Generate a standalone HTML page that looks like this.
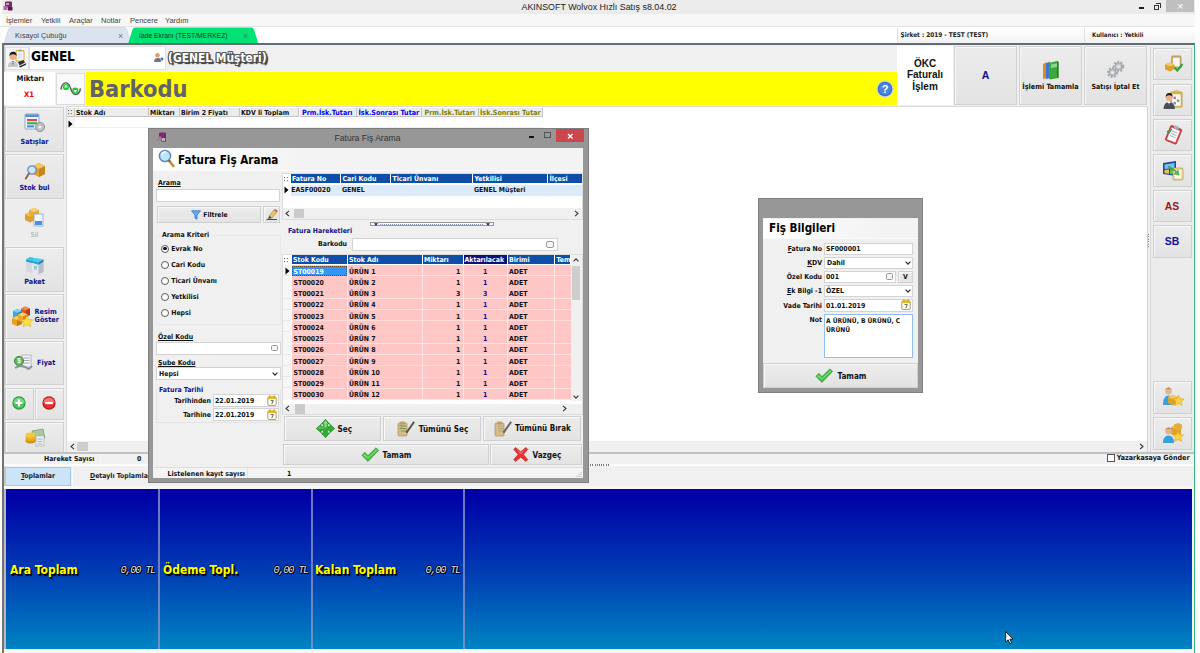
<!DOCTYPE html>
<html><head><meta charset="utf-8"><title>AKINSOFT Wolvox Hızlı Satış</title>
<style>
*{box-sizing:border-box;margin:0;padding:0}
html,body{width:1200px;height:653px;overflow:hidden;background:#f0f0f0}
body{position:relative;font-family:"DejaVu Sans Condensed","Liberation Sans",sans-serif;font-weight:bold;font-size:6.9px;color:#111;line-height:1}
.a{position:absolute}
.t{position:absolute;white-space:nowrap;line-height:10px;height:10px}
.seg{font-family:"Liberation Sans",sans-serif;font-weight:normal;font-size:8px;color:#444}
.btn{position:absolute;background:linear-gradient(#ececec,#e3e3e3);border:1px solid #d0d0d0;box-shadow:inset 1px 1px 0 #f8f8f8}
.navy{color:#10108c}
.hd{position:absolute;top:107.6px;height:9.7px;background:#ececec;border-right:1px solid #c4c4c4;border-bottom:1px solid #c4c4c4;line-height:10px;padding-left:1px;white-space:nowrap;overflow:hidden}
.inp{position:absolute;background:#fff;border:1px solid #d4d4d4}
.u{text-decoration:underline}
.yl{font-size:12px;line-height:16px;height:16px;color:#ffff00;text-shadow:1px 1px 0 #000,1.5px 1.5px 1px #001}
.dg{font-family:"Liberation Mono",monospace;font-weight:normal;font-style:italic;font-size:10.3px;letter-spacing:-1.25px;line-height:12px;height:12px;color:#dfe2ee;text-shadow:-1px 0 #000,1px 0 #000,0 -1px #000,0 1px #000,1px 1px #001}

.bh{position:absolute;height:9px;background:#0e4ea6;color:#fff;line-height:10px;padding-left:1.5px;white-space:nowrap;overflow:hidden;font-size:6.9px}
.rd{position:absolute;left:161.2px;width:8px;height:8px;border-radius:50%;background:#fff;border:1px solid #5a5a5a}
.rd i{position:absolute;left:1.2px;top:1.2px;width:3.6px;height:3.6px;border-radius:50%;background:#111}
.cal{position:absolute;width:9px;height:10px;background:#fdfdf4;border:1px solid #8a8a8a;border-top:2.5px solid #e8b020;border-radius:1.5px}
.cal:after{content:"";position:absolute;left:2.5px;top:2px;width:2px;height:3px;background:#666}
.r2{position:absolute;left:291.5px;width:279.5px;height:12px;line-height:12px;font-size:6.9px;white-space:nowrap}
.c{position:absolute;top:0;height:12px;padding:0 1.5px;overflow:hidden}
.k{left:0.5px;width:55.3px}.n{left:56px;width:74.3px}.m{left:131px;width:40.3px;text-align:right;padding-right:2.5px}.ak{left:172px;width:43.3px;text-align:center;color:#10108c}.b{left:216px;width:46.8px}
svg{position:absolute;overflow:visible}
</style></head><body>
<!-- TOP CHROME -->
<div class="a" id="titlebar" style="left:0;top:0;width:1200px;height:13.5px;background:#ececec"></div>
<div class="a" id="menubar" style="left:0;top:13.5px;width:1200px;height:13.5px;background:#f7f7f7"></div>
<div class="a" id="tabrow" style="left:0;top:27px;width:1200px;height:17px;background:#fff"></div>
<div class="a" style="left:0;top:0;width:2px;height:653px;background:#fbfbfb"></div>
<!--CHROME-START-->
<svg style="left:3px;top:1px" width="11" height="11" viewBox="0 0 11 11"><rect x="2" y="0.5" width="7" height="6" rx="1" fill="#7a2a6a"/><rect x="0.5" y="5" width="4" height="4" fill="#b06aa0"/><rect x="5" y="6" width="4.5" height="3.5" fill="#5a1a4a"/><rect x="3" y="2" width="3" height="2" fill="#c9a0c0"/></svg>
<div class="t seg" style="left:521px;top:2px;font-size:8.9px;color:#222;width:156px;text-align:center">AKINSOFT Wolvox Hızlı Satış s8.04.02</div>
<div class="a" style="left:1139px;top:7px;width:5px;height:2px;background:#222"></div>
<div class="a" style="left:1153.5px;top:4.5px;width:5.5px;height:5px;border:1px solid #333;border-top-width:1.5px"></div>
<div class="a" style="left:1155.5px;top:3px;width:5px;height:4.5px;border:1px solid #333;border-bottom:0;border-left:0;border-top-width:1.3px"></div>
<div class="a" style="left:1166.3px;top:0;width:28px;height:11.5px;background:#bfbfbf"></div>
<div class="t" style="left:1177.3px;top:0.6px;color:#fff;font-size:10.5px;font-weight:normal;font-family:'Liberation Sans',sans-serif">×</div>
<div class="t seg" style="left:6px;top:15.8px;font-size:7.5px">İşlemler</div>
<div class="t seg" style="left:41px;top:15.8px;font-size:7.5px">Yetkili</div>
<div class="t seg" style="left:69px;top:15.8px;font-size:7.5px">Araçlar</div>
<div class="t seg" style="left:101px;top:15.8px;font-size:7.5px">Notlar</div>
<div class="t seg" style="left:130px;top:15.8px;font-size:7.5px">Pencere</div>
<div class="t seg" style="left:165px;top:15.8px;font-size:7.5px">Yardım</div>
<div class="a" style="left:0;top:26px;width:1200px;height:1px;background:#e4e4e4"></div>
<svg style="left:0;top:27px" width="270" height="17" viewBox="0 0 270 17"><path d="M4 17 L8.5 2 Q9 0.5 11 0.5 L124 0.5 Q126 0.5 126.8 2.5 L131 17 Z" fill="#dae3ee" stroke="#c3cfdd" stroke-width="0.6"/><path d="M128 17 L132.5 2.5 Q133 0.5 135.5 0.5 L251 0.5 Q253.5 0.5 254 2.5 L258.5 17 Z" fill="#00e273"/></svg>
<div class="t seg" style="left:15px;top:31.3px;font-size:7.3px;color:#444">Kısayol Çubuğu</div>
<div class="t seg" style="left:118px;top:31px;font-size:9px;color:#777">×</div>
<div class="t seg" style="left:139px;top:31.3px;font-size:7.3px;color:#1a3a2a;transform:scaleX(.93);transform-origin:0 0">İade Ekranı (TEST/MERKEZ)</div>
<div class="t seg" style="left:243px;top:31px;font-size:9px;color:#3a8a6a">×</div>
<div class="a" style="left:897px;top:28px;width:187px;height:15px;background:linear-gradient(#fff,#f2f2f2);border-left:1px solid #e2e2e2"></div>
<div class="a" style="left:1084px;top:28px;width:112px;height:15px;background:linear-gradient(#fff,#f2f2f2);border-left:1px solid #e2e2e2"></div>
<div class="t" style="left:900.5px;top:30px;font-size:6.45px;color:#222">Şirket : 2019 - TEST (TEST)</div>
<div class="t" style="left:1092px;top:30px;font-size:6.1px;color:#222">Kullanıcı : Yetkili</div>
<!--CHROME-END-->
<!-- MAIN FRAME -->
<div class="a" id="frame" style="left:2px;top:43.4px;width:1193px;height:610px;background:#f0f0f0"></div>
<div class="a" style="left:2px;top:43.4px;width:1193px;height:1.7px;background:#626c74"></div>
<div class="a" style="left:2px;top:43.4px;width:1.6px;height:610px;background:#747474"></div>
<div class="a" style="left:3.6px;top:45px;width:0.8px;height:608px;background:#c8c8c8"></div>
<!--HEADER-START-->
<!-- customer row -->
<div class="a" style="left:4.5px;top:46.5px;width:24.5px;height:23.5px;background:#f6f6f6;border:1px solid #dedede"></div>
<svg style="left:7px;top:49px" width="20" height="19" viewBox="0 0 20 19"><rect x="9" y="1.6" width="8" height="10.5" rx="1" fill="#f4f8fc" stroke="#e0b030" stroke-width="1.1"/><rect x="11.5" y="0.6" width="3" height="2" rx=".6" fill="#8aa8d0"/><path d="M11 5 H15 M11 7 H15 M11 9 H15" stroke="#b8c8e0" stroke-width=".7"/><circle cx="6" cy="7.6" r="3.5" fill="#f0b090"/><path d="M2.3 7 Q2.5 2.6 6.5 2.8 Q9.8 3 9.6 7 Q8.6 4.8 6 5.2 Q3.6 5 2.3 7Z" fill="#181818"/><path d="M0.8 18 Q1 12 6 12 Q11 12 11.2 18Z" fill="#c4c8ce"/><path d="M5 12 L6 16.5 L7 12Z" fill="#444"/><path d="M4 12 L6 13.6 L8 12" fill="none" stroke="#fff" stroke-width=".8"/><path d="M11 13 L16.5 11 L18 13.5 L12.5 16.5Z" fill="#2a2e34"/><path d="M12 17.5 L17.5 15 L19.5 14 L18.6 16 L13 18.5Z" fill="#1c1c20"/></svg>
<div class="a" style="left:29px;top:46px;width:137px;height:24px;background:#fff;border:1px solid #e0e0e0"></div>
<div class="t" style="left:31px;top:49.3px;font-size:13.6px;letter-spacing:-0.25px;line-height:15px;height:15px;color:#000">GENEL</div>
<svg style="left:153px;top:52px" width="11" height="11" viewBox="0 0 11 11"><circle cx="4.5" cy="3.2" r="2.3" fill="#d9a070"/><path d="M1 10 Q1 6 4.5 6 Q8 6 8 10Z" fill="#6a7684"/><path d="M6 7 L10 7 M8.5 5.5 L10 7 L8.5 8.5" stroke="#3a6ab0" stroke-width="1.1" fill="none"/></svg>
<div class="t" style="left:168px;top:50px;font-size:11.9px;line-height:16px;height:16px;color:#fff;text-shadow:-1px 0 #555,1px 0 #555,0 -1px #555,0 1px #555,-1px -1px #666,1px -1px #666,-1px 1px #555,1px 1px #444,2px 2px 1px #333,2px 1px 1px #444">(GENEL Müşteri)</div>
<!-- barcode row -->
<div class="a" style="left:4px;top:71.5px;width:51px;height:33.5px;background:#fff"></div>
<div class="t" style="left:16.5px;top:74px;font-size:7.7px;color:#111">Miktarı</div>
<div class="t" style="left:24px;top:89.5px;font-size:7.7px;color:#f00000">X1</div>
<div class="a" style="left:56px;top:73px;width:29px;height:32px;background:#fafafa;border:1px solid #dcdcdc"></div>
<svg style="left:59.5px;top:79.5px" width="22" height="18" viewBox="0 0 22 18"><path d="M0.5 9 H21.5" stroke="#f0a030" stroke-width=".8" stroke-dasharray="1 1"/><path d="M1 9.5 C2 2 8 0 10.5 8 C13 17 19 16 20.5 8.5" fill="none" stroke="#5a5a5a" stroke-width="1.4"/><circle cx="6" cy="7" r="3.1" fill="#22c83a"/><circle cx="15.3" cy="10.6" r="3.1" fill="#22c83a"/><path d="M6 4.6 L8 7.6 L4 7.6Z" fill="#c8ffd0"/><path d="M15.3 13 L17.3 10 L13.3 10Z" fill="#c8ffd0"/></svg>
<div class="a" style="left:86px;top:72px;width:811px;height:33px;background:#ffff00"></div>
<div class="t" style="left:89px;top:73.6px;font-size:23.4px;line-height:30px;height:30px;color:#62626e">Barkodu</div>
<svg style="left:876px;top:80px" width="18" height="18" viewBox="0 0 18 18"><circle cx="9" cy="9" r="8.5" fill="#c8d4e8"/><circle cx="9" cy="9" r="7.3" fill="#3a6cc8"/><circle cx="9" cy="9" r="6" fill="#4a86e0"/><text x="9" y="13" font-family="Liberation Sans" font-weight="bold" font-size="11" fill="#fff" text-anchor="middle">?</text></svg>
<!-- top right buttons -->
<div class="a" style="left:897px;top:46px;width:56px;height:59px;background:#fff"></div>
<div class="t" style="left:897px;top:57.5px;width:56px;text-align:center;font-family:'Liberation Sans',sans-serif;font-size:10px;line-height:11.7px;height:36px;color:#111;white-space:normal">ÖKC Faturalı İşlem</div>
<div class="btn" style="left:954px;top:46px;width:63px;height:59px"></div>
<div class="t navy" style="left:954px;top:69px;width:63px;text-align:center;font-family:'Liberation Sans',sans-serif;font-size:10.5px;line-height:12px;height:12px">A</div>
<div class="btn" style="left:1019px;top:46px;width:63px;height:59px"></div>
<svg style="left:1042px;top:60px" width="18" height="20" viewBox="0 0 18 20"><path d="M1 4 L5 2 L5 18 L1 19Z" fill="#e08a20"/><path d="M4 3.5 L8 1.5 L8 18 L4 19Z" fill="#3a78d0"/><path d="M7 3 L15 1 L16.5 2 L16.5 18 L8 19.5 L7 18.5Z" fill="#3aa83a"/><path d="M9 4.5 L15 3.3 L15 7 L9 8Z" fill="#8ad88a"/><path d="M15 1 L16.5 2 L16.5 18 L15 17Z" fill="#2a7a2a"/></svg>
<div class="t" style="left:1019px;top:82.3px;width:63px;text-align:center;font-size:7.2px">İşlemi Tamamla</div>
<div class="btn" style="left:1084px;top:46px;width:63px;height:59px"></div>
<svg style="left:1106px;top:60px" width="20" height="19" viewBox="0 0 20 19"><g fill="#c4c8cc" stroke="#8a9096" stroke-width=".7"><circle cx="12.5" cy="6.5" r="4.6" stroke-dasharray="2 1.3" stroke-width="2.4" fill="none" stroke="#a8adb2"/><circle cx="12.5" cy="6.5" r="3.6"/><circle cx="6.5" cy="12.5" r="4.4" stroke-dasharray="2 1.3" stroke-width="2.4" fill="none" stroke="#a8adb2"/><circle cx="6.5" cy="12.5" r="3.4"/></g><circle cx="12.5" cy="6.5" r="1.3" fill="#f0f0f0"/><circle cx="6.5" cy="12.5" r="1.3" fill="#f0f0f0"/></svg>
<div class="t" style="left:1084px;top:82.3px;width:63px;text-align:center;font-size:7px">Satışı İptal Et</div>
<!--HEADER-END-->
<!--LEFT-SIDEBAR-START-->
<div class="btn" style="left:5px;top:107px;width:59px;height:45px"></div>
<svg style="left:24px;top:113px" width="22" height="20" viewBox="0 0 22 20"><rect x="1" y="1" width="14" height="15" rx="1" fill="#eef4fb" stroke="#7a9ac8" stroke-width=".8"/><rect x="1.4" y="1.4" width="13.2" height="2.6" fill="#5a8ad0"/><rect x="3" y="6" width="10" height="2.2" fill="#e04848"/><rect x="3" y="9.2" width="10" height="2.2" fill="#38b060"/><rect x="3" y="12.4" width="7" height="2" fill="#4a80d8"/><circle cx="16" cy="14" r="4.6" fill="#b8bec6" stroke="#7a8088" stroke-width=".7"/><circle cx="16" cy="14" r="1.6" fill="#f4f4f4"/></svg>
<div class="t navy" style="left:5px;top:137px;width:59px;text-align:center;font-size:7.2px">Satışlar</div>
<div class="btn" style="left:5px;top:154px;width:59px;height:45px"></div>
<svg style="left:25px;top:161px" width="22" height="20" viewBox="0 0 22 20"><path d="M8 5 L14 2 L20 5 L20 13 L14 16 L8 13Z" fill="#e0a030"/><path d="M8 5 L14 8 L20 5 L14 2Z" fill="#f4c860"/><path d="M14 8 L14 16 L20 13 L20 5Z" fill="#c88420"/><circle cx="7" cy="9" r="4.2" fill="#cfe6fa" stroke="#6a8ab8" stroke-width="1.2"/><path d="M4 12.5 L0.8 17.5" stroke="#8a6a3a" stroke-width="2" stroke-linecap="round"/></svg>
<div class="t navy" style="left:5px;top:183px;width:59px;text-align:center;font-size:7.2px">Stok bul</div>
<div class="a" style="left:5px;top:200px;width:59px;height:45px;background:#ededed"></div>
<svg style="left:24px;top:207px" width="22" height="21" viewBox="0 0 22 21"><path d="M1 7 L6 4.5 L11 7 L11 13 L6 15.5 L1 13Z" fill="#e0a030"/><path d="M1 7 L6 9.5 L11 7 L6 4.5Z" fill="#f4c860"/><path d="M5 3 L10 0.8 L15 3 L15 8 L10 10 L5 8Z" fill="#e8ac38"/><path d="M5 3 L10 5 L15 3 L10 0.8Z" fill="#f8d070"/><rect x="10" y="7" width="9" height="12" fill="#f4f8fc" stroke="#8aa4c8" stroke-width=".8"/><rect x="11" y="14" width="7" height="4" fill="#4a90e0"/></svg>
<div class="t" style="left:5px;top:230px;width:59px;text-align:center;font-size:6.9px;font-weight:normal;color:#9a9a9a">Sil</div>
<div class="btn" style="left:5px;top:247px;width:59px;height:45px"></div>
<svg style="left:25px;top:253.5px" width="20" height="21" viewBox="0 0 20 21"><path d="M1 5.5 L5 3 L11 4.5 L11 17 L6.5 19 L1 17Z" fill="#d4d8de"/><path d="M1 5.5 L5 3 L11 4.5 L7 7Z" fill="#38c0ea"/><path d="M1 5.5 L7 7 L7 9 L1 7.5Z" fill="#20a0d0"/><path d="M7 7 L11 4.5 L11 6.5 L7 9Z" fill="#1888b8"/><path d="M7 6.5 L11.5 4 L18.5 5.5 L18.5 18 L13.5 20.5 L7 18.5Z" fill="#e2e5ea"/><path d="M13.5 8.5 L18.5 5.5 L18.5 18 L13.5 20.5Z" fill="#b8bec8"/><path d="M7 6.5 L11.5 4 L18.5 5.5 L13.5 8.5Z" fill="#48ccf0"/><path d="M7 6.5 L13.5 8.5 L13.5 10.8 L7 8.8Z" fill="#20a8d8"/><path d="M13.5 8.5 L18.5 5.5 L18.5 7.8 L13.5 10.8Z" fill="#1488b8"/><rect x="9" y="12" width="3" height="3.5" fill="#88b8e8" opacity=".8"/></svg>
<div class="t navy" style="left:5px;top:277px;width:59px;text-align:center;font-size:7.2px">Paket</div>
<div class="btn" style="left:5px;top:294px;width:59px;height:45px"></div>
<svg style="left:11px;top:305.5px" width="22" height="21" viewBox="0 0 22 21"><path d="M2 5 L6.5 3 L11 5 L11 11 L6.5 13 L2 11Z" fill="#3aa8e0"/><path d="M2 5 L6.5 7 L11 5 L6.5 3Z" fill="#7ad0f4"/><path d="M6.5 7 L6.5 13 L11 11 L11 5Z" fill="#2288c0"/><path d="M10 2.5 L14.5 0.5 L19 2.5 L19 9 L14.5 11 L10 9Z" fill="#e05828"/><path d="M10 2.5 L14.5 4.5 L19 2.5 L14.5 0.5Z" fill="#f08858"/><path d="M14.5 4.5 L14.5 11 L19 9 L19 2.5Z" fill="#b83c18"/><path d="M1 12 L6 10 L11 12 L11 18 L6 20 L1 18Z" fill="#e8a020"/><path d="M1 12 L6 14 L11 12 L6 10Z" fill="#f8cc60"/><path d="M6 14 L6 20 L11 18 L11 12Z" fill="#c88010"/><path d="M7 8.5 L12 6.5 L16.5 8.5 L16.5 14.5 L12 16.5 L7 14.5Z" fill="#f0a828"/><path d="M7 8.5 L12 10.5 L16.5 8.5 L12 6.5Z" fill="#fad470"/><path d="M12 10.5 L12 16.5 L16.5 14.5 L16.5 8.5Z" fill="#d08818"/><path d="M16 9.5 L17.8 13.4 L22 13.8 L18.9 16.6 L19.8 20.8 L16 18.6 L12.2 20.8 L13.1 16.6 L10 13.8 L14.2 13.4Z" fill="#fce040" stroke="#e0a010" stroke-width=".5"/></svg>
<div class="t navy" style="left:34.6px;top:308px;width:28px;text-align:left;font-size:7.2px;line-height:8px;height:18px;white-space:normal">Resim Göster</div>
<div class="btn" style="left:5px;top:341px;width:59px;height:44px"></div>
<svg style="left:13px;top:354px" width="21" height="18" viewBox="0 0 21 18"><rect x="9" y="1" width="9" height="12" fill="#f2f4f6" stroke="#9aa2ac" stroke-width=".7"/><path d="M10.5 4 H16.5 M10.5 6.5 H16.5 M10.5 9 H16.5" stroke="#8a98a8" stroke-width=".8"/><circle cx="6" cy="7" r="4.6" fill="#5ab85a" stroke="#2a7a2a" stroke-width=".8"/><text x="6" y="9.4" font-size="6.5" font-family="Liberation Sans" font-weight="bold" fill="#fff" text-anchor="middle">$</text><path d="M2 14 Q8 10 14 14 Q16 16 19 12" fill="none" stroke="#8a9098" stroke-width="2"/></svg>
<div class="t navy" style="left:37px;top:358.3px;font-size:7.2px">Fiyat</div>
<div class="btn" style="left:5px;top:388px;width:29px;height:32px"></div>
<svg style="left:12.4px;top:396px" width="14" height="14" viewBox="0 0 16 16"><circle cx="8" cy="8" r="7.6" fill="#2a9a3a"/><circle cx="8" cy="8" r="6.4" fill="#4ac45a"/><path d="M8 1.6 A6.4 6.4 0 0 1 14.4 8 Q8 6 1.6 8 A6.4 6.4 0 0 1 8 1.6Z" fill="#8ae09a" opacity=".7"/><path d="M8 4 V12 M4 8 H12" stroke="#fff" stroke-width="2.4"/></svg>
<div class="btn" style="left:35px;top:388px;width:29px;height:32px"></div>
<svg style="left:42.4px;top:396px" width="14" height="14" viewBox="0 0 16 16"><circle cx="8" cy="8" r="7.6" fill="#b81818"/><circle cx="8" cy="8" r="6.4" fill="#e83030"/><path d="M8 1.6 A6.4 6.4 0 0 1 14.4 8 Q8 6 1.6 8 A6.4 6.4 0 0 1 8 1.6Z" fill="#f88a8a" opacity=".7"/><path d="M3.6 8 H12.4" stroke="#fff" stroke-width="2.6"/></svg>
<div class="btn" style="left:5px;top:422px;width:59px;height:31px"></div>
<svg style="left:24px;top:428px" width="22" height="20" viewBox="0 0 22 20"><path d="M8 3 L19 1 L21 10 L10 13Z" fill="#a8c8a0" stroke="#6a8a66" stroke-width=".6"/><rect x="12" y="8" width="8" height="10" fill="#eef0f2" stroke="#a0a8b0" stroke-width=".6"/><path d="M13.5 11 H18.5 M13.5 13.5 H18.5 M13.5 16 H18.5" stroke="#8a98a8" stroke-width=".7"/><ellipse cx="6.5" cy="13" rx="5" ry="2.4" fill="#c89010"/><ellipse cx="6.5" cy="11" rx="5" ry="2.4" fill="#e0a820"/><ellipse cx="6.5" cy="9" rx="5" ry="2.4" fill="#e8b428"/><ellipse cx="6.5" cy="7" rx="5" ry="2.4" fill="#f4c838"/></svg>
<!--LEFT-SIDEBAR-END-->
<!--MAIN-GRID-START-->
<div class="a" style="left:66px;top:106px;width:1082px;height:347px;background:#fff;border:1px solid #dadada;border-right-color:#cfcfcf"></div>
<div class="hd" style="left:67px;width:8px"></div>
<div class="a" style="left:68.3px;top:109.5px;width:1.2px;height:1.3px;background:#555;box-shadow:2.8px 0 #555,0 3.2px #555,2.8px 3.2px #555"></div>
<div class="hd" style="left:75px;width:74px">Stok Adı</div>
<div class="hd" style="left:149px;width:31px">Miktarı</div>
<div class="hd" style="left:180px;width:60px">Birim 2 Fiyatı</div>
<div class="hd" style="left:240px;width:59px">KDV li Toplam</div>
<div class="hd" style="left:299.5px;width:57.5px;color:#0000f0;padding-left:2.5px;font-size:7.1px">Prm.İsk.Tutarı</div>
<div class="hd" style="left:357px;width:65px;color:#0000f0;padding-left:1.5px;font-size:7.1px">İsk.Sonrası Tutar</div>
<div class="hd" style="left:422px;width:56.5px;color:#808000;padding-left:2.5px;font-size:7.1px">Prm.İsk.Tutarı</div>
<div class="hd" style="left:478.5px;width:64.5px;color:#808000;padding-left:1.5px;font-size:7.1px">İsk.Sonrası Tutar</div>
<div class="a" style="left:67px;top:117px;width:476px;height:11px;border-bottom:1px solid #efefef;background:linear-gradient(90deg,#f4f4f4 8px,transparent 8px)"></div>
<svg style="left:68px;top:120px" width="5" height="8" viewBox="0 0 5 8"><path d="M0.5 0.5 L4.5 4 L0.5 7.5Z" fill="#000"/></svg>
<!-- h scrollbar -->
<div class="a" style="left:67px;top:441px;width:1080px;height:11px;background:#f0f0f0"></div>
<div class="a" style="left:77px;top:442px;width:11px;height:9px;background:#cdcdcd"></div>
<svg style="left:70px;top:443px" width="5" height="7" viewBox="0 0 5 7"><path d="M4 0.8 L1 3.5 L4 6.2" fill="none" stroke="#333" stroke-width="1.1"/></svg>
<svg style="left:1139px;top:443px" width="5" height="7" viewBox="0 0 5 7"><path d="M1 0.8 L4 3.5 L1 6.2" fill="none" stroke="#333" stroke-width="1.1"/></svg>
<div class="a" style="left:1148px;top:234px;width:1px;height:14px;background:repeating-linear-gradient(#888 0 1px,transparent 1px 2.5px)"></div>
<!--MAIN-GRID-END-->
<!--RIGHT-SIDEBAR-START-->
<div class="a" style="left:1150px;top:46px;width:44px;height:407px;background:#ececec;border-left:1px solid #d8d8d8"></div>
<div class="a" style="left:1193.5px;top:44px;width:1.6px;height:609px;background:#35b87c"></div>
<div class="a" style="left:1195.1px;top:0;width:5px;height:653px;background:#fdfdfd"></div>
<div class="btn" style="left:1152.5px;top:47.5px;width:39px;height:32.5px"></div>
<svg style="left:1164px;top:54.5px" width="19" height="18" viewBox="0 0 20 19"><rect x="8" y="1" width="10" height="13" rx="1" fill="#d8b070" stroke="#9a7a40" stroke-width=".6"/><rect x="9.5" y="3" width="7" height="9" fill="#f4f6f8"/><path d="M1 10 L6 8 L11 10 L11 15 L6 17.5 L1 15Z" fill="#e0a030"/><path d="M1 10 L6 12 L11 10 L6 8Z" fill="#f4c860"/><path d="M11 13 L14 16.5 L19.5 9.5" fill="none" stroke="#2aa83a" stroke-width="2.2"/></svg>
<div class="btn" style="left:1152.5px;top:83.5px;width:39px;height:32.3px"></div>
<svg style="left:1162.5px;top:89.5px" width="21" height="21" viewBox="0 0 22 22"><rect x="8" y="2" width="12" height="16" rx="1" fill="#e0b850" stroke="#a88830" stroke-width=".6"/><rect x="9.5" y="4.5" width="9" height="12" fill="#f6f8fa"/><rect x="11.5" y="0.8" width="5" height="2.6" rx=".8" fill="#e8c040" stroke="#a88830" stroke-width=".4"/><rect x="11" y="7" width="2.5" height="2.5" fill="#e06060"/><rect x="14.5" y="10" width="2.5" height="2.5" fill="#60b060"/><rect x="11" y="12.5" width="2.5" height="2.5" fill="#6090e0"/><circle cx="6.5" cy="8" r="3.6" fill="#e8b48c"/><path d="M2.8 7.4 Q3 3 6.8 3.2 Q10.2 3.4 10 7.4 Q9 5.2 6.5 5.6 Q4 5.4 2.8 7.4Z" fill="#181818"/><path d="M0.5 20 Q1 12.5 6.5 12.5 Q12 12.5 12.5 20Z" fill="#4a4e56"/><path d="M4.6 12.5 L6.5 15 L8.4 12.5Z" fill="#fff"/><path d="M6 13.5 L6.5 18.5 L7 13.5Z" fill="#d83020"/></svg>
<div class="btn" style="left:1152.5px;top:118.8px;width:39px;height:32.4px"></div>
<svg style="left:1164px;top:124px" width="20" height="22" viewBox="0 0 20 22"><g transform="rotate(22 10 11)"><rect x="3.5" y="3" width="12" height="16" rx="1.2" fill="#d84848" stroke="#9a2828" stroke-width=".6"/><rect x="5" y="5" width="9" height="12.5" fill="#f8f8fa"/><rect x="7" y="1.6" width="5" height="3" rx=".8" fill="#a8b0b8"/><path d="M6.5 8 H12.5 M6.5 10.5 H12.5 M6.5 13 H12.5" stroke="#9aa8c0" stroke-width=".8"/></g><path d="M3 7 L5 9 L8 5" stroke="#3a9a4a" stroke-width="1.2" fill="none"/></svg>
<div class="btn" style="left:1152.5px;top:154.2px;width:39px;height:32.5px"></div>
<svg style="left:1162px;top:160px" width="22" height="22" viewBox="0 0 22 22"><path d="M1 3 L14 1 L14 16 L1 14Z" fill="#1a4a9a"/><path d="M2.5 4.5 L12.5 3 L12.5 8 L2.5 9Z" fill="#7ac0f0"/><path d="M2.5 10 L7 9.5 L7 13.8 L2.5 13.2Z" fill="#f0c040"/><path d="M8 9.4 L12.5 9 L12.5 14.6 L8 14Z" fill="#60c060"/><rect x="11" y="8" width="10" height="12" rx="1" fill="#e8d490" stroke="#a89040" stroke-width=".6"/><rect x="12.5" y="10" width="7" height="8.5" fill="#f8f8f0"/><path d="M6 7 L14 12 L12 14 L17 15 L16 10 L14.8 11.4 L7 6Z" fill="#58c040" stroke="#2a8a20" stroke-width=".5"/></svg>
<div class="btn" style="left:1152.5px;top:189.7px;width:39px;height:32.4px"></div>
<div class="t" style="left:1152.5px;top:201.3px;width:39px;text-align:center;font-family:'Liberation Sans',sans-serif;font-size:10.4px;line-height:12px;height:12px;color:#a01414">AS</div>
<div class="btn" style="left:1152.5px;top:225px;width:39px;height:32.6px"></div>
<div class="t" style="left:1152.5px;top:236px;width:39px;text-align:center;font-family:'Liberation Sans',sans-serif;font-size:10.4px;line-height:12px;height:12px;color:#10109a">SB</div>
<div class="btn" style="left:1153px;top:381px;width:39px;height:33px"></div>
<svg style="left:1162px;top:386px" width="22" height="22" viewBox="0 0 22 22"><circle cx="6.5" cy="5" r="3.4" fill="#e8b48c"/><path d="M3.2 4 Q6.5 -0.5 9.8 4 Q8 2 6.5 2.4 Q5 2 3.2 4Z" fill="#4a3426"/><path d="M1 19 Q1 9.5 6.5 9.5 Q12 9.5 12 19Z" fill="#38a0e0"/><path d="M6 11 L11 9 L16 11 L16 17 L11 19.5 L6 17Z" fill="#e0a030"/><path d="M6 11 L11 13 L16 11 L11 9Z" fill="#f4c860"/><path d="M16.5 9 L18.2 12.6 L22 13 L19.2 15.6 L20 19.5 L16.5 17.5 L13 19.5 L13.8 15.6 L11 13 L14.8 12.6Z" fill="#fad23a" stroke="#d89a10" stroke-width=".5"/></svg>
<div class="btn" style="left:1153px;top:417px;width:39px;height:33px"></div>
<svg style="left:1162px;top:422px" width="22" height="22" viewBox="0 0 22 22"><path d="M9 5 L14 3 L19 5 L19 12 L14 14.5 L9 12Z" fill="#e0a030"/><path d="M9 5 L14 7 L19 5 L14 3Z" fill="#f4c860"/><path d="M12 2.5 L16 1 L20 2.5 L20 7 L16 8.6 L12 7Z" fill="#e8ac38"/><circle cx="6.5" cy="9" r="3.4" fill="#e8b48c"/><path d="M3.2 8 Q6.5 3.5 9.8 8 Q8 6 6.5 6.4 Q5 6 3.2 8Z" fill="#4a3426"/><path d="M1 21 Q1 13.5 6.5 13.5 Q12 13.5 12 21Z" fill="#38a0e0"/><path d="M16 9 L17.7 12.6 L21.5 13 L18.7 15.6 L19.5 19.5 L16 17.5 L12.5 19.5 L13.3 15.6 L10.5 13 L14.3 12.6Z" fill="#fad23a" stroke="#d89a10" stroke-width=".5"/></svg>
<!--RIGHT-SIDEBAR-END-->
<!--BOTTOM-START-->
<div class="a" style="left:4px;top:452px;width:1190px;height:1.5px;background:#c2c2c2"></div>
<div class="a" style="left:4px;top:453.5px;width:1190px;height:11px;background:#f1f1f1"></div>
<div class="a" style="left:100px;top:454px;width:1px;height:10px;background:#fafafa"></div>
<div class="t" style="left:44px;top:454px;font-size:6.9px">Hareket Sayısı</div>
<div class="t" style="left:137px;top:454px;font-size:6.9px">0</div>
<div class="a" style="left:1107px;top:454px;width:8px;height:8px;background:#fff;border:1px solid #555"></div>
<div class="t" style="left:1116.8px;top:453.3px;font-size:7.1px">Yazarkasaya Gönder</div>
<div class="a" style="left:4px;top:464px;width:1190px;height:2px;background:#fcfcfc"></div>
<div class="a" style="left:588px;top:464px;width:22px;height:1.5px;background:repeating-linear-gradient(90deg,#777 0 1px,transparent 1px 2.2px)"></div>
<div class="a" style="left:5px;top:467px;width:66px;height:18.5px;background:#cce4f7;border:1px solid #9fcdf0"></div>
<div class="t" style="left:5px;top:471px;width:66px;text-align:center;font-size:6.9px;color:#222"><span class="u">T</span>oplamlar</div>
<div class="a" style="left:72px;top:467px;width:1px;height:19px;background:#fafafa"></div>
<div class="t" style="left:90px;top:471px;font-size:6.9px;color:#222"><span class="u">D</span>etaylı Toplamlar</div>
<div class="a" style="left:4.4px;top:485.9px;width:1189px;height:3.1px;background:#f9f8f7"></div>
<!-- blue panel -->
<div class="a" style="left:5.5px;top:488.8px;width:1186.5px;height:160px;background:linear-gradient(#0000a6 0%,#0006a8 8%,#003ab3 50%,#005eba 75%,#0084c3 100%)"></div>
<div class="a" style="left:4px;top:489px;width:1.5px;height:160px;background:#b8b8c0"></div>
<div class="a" style="left:158px;top:489px;width:1.6px;height:160px;background:#8a94c4;opacity:.8"></div>
<div class="a" style="left:311px;top:489px;width:1.6px;height:160px;background:#8a94c4;opacity:.8"></div>
<div class="a" style="left:463px;top:489px;width:1.6px;height:160px;background:#8a94c4;opacity:.8"></div>
<div class="a" style="left:1192px;top:489px;width:1.5px;height:160px;background:#f4f4f4"></div>
<div class="a" style="left:4.4px;top:648.8px;width:1189px;height:4.2px;background:#f6f6f6"></div>
<div class="t yl" style="left:10px;top:561.7px">Ara Toplam</div>
<div class="t dg" style="left:120.5px;top:564px">0,00 TL</div>
<div class="t yl" style="left:163px;top:561.7px">Ödeme Topl.</div>
<div class="t dg" style="left:273.5px;top:564px">0,00 TL</div>
<div class="t yl" style="left:315px;top:561.7px">Kalan Toplam</div>
<div class="t dg" style="left:425.5px;top:564px">0,00 TL</div>
<svg style="left:1005px;top:631px" width="9" height="14" viewBox="0 0 9 14"><path d="M0.7 0.7 L0.7 11 L3.2 8.8 L5 12.8 L6.6 12.1 L4.9 8.2 L8 8.1Z" fill="#fff" stroke="#000" stroke-width=".8"/></svg>
<!--BOTTOM-END-->
<!--DIALOG-START-->
<div class="a" style="left:148px;top:128.3px;width:441px;height:355px;background:#979797;border:1px solid #7e7e7e"></div>
<svg style="left:157px;top:132px" width="10" height="10" viewBox="0 0 10 10"><rect x="2" y="0.5" width="7" height="5.5" rx="1" fill="#7a2a6a"/><rect x="0.5" y="4.5" width="4" height="4" fill="#a878a0"/><rect x="4.5" y="5.5" width="4.5" height="4" fill="#5a1a4a"/><text x="4.7" y="9.3" font-size="4.5" font-family="Liberation Sans" font-weight="bold" fill="#fff">w</text></svg>
<div class="t seg" style="left:317.5px;top:133.2px;width:100px;text-align:center;font-size:8.6px;color:#333">Fatura Fiş Arama</div>
<div class="a" style="left:529px;top:136px;width:5px;height:2px;background:#111"></div>
<div class="a" style="left:544px;top:132px;width:7px;height:6px;border:1px solid #555;border-top-width:1.5px"></div>
<div class="a" style="left:556px;top:129px;width:28px;height:13px;background:#c9474d"></div>
<svg style="left:567px;top:132.5px" width="6.5" height="6.5" viewBox="0 0 8 8"><path d="M1.2 1.2 L6.8 6.8 M6.8 1.2 L1.2 6.8" stroke="#fff" stroke-width="1.5"/></svg>
<div class="a" style="left:153.3px;top:148.3px;width:429.9px;height:329.7px;background:#f0f0f0"></div>
<div class="a" style="left:153.3px;top:148.3px;width:429.9px;height:23px;background:linear-gradient(90deg,#fff 0,#fdfdfd 20px,#f3f3f3 150px);border-bottom:1px solid #fafafa"></div>
<svg style="left:158px;top:149px" width="17" height="19" viewBox="0 0 17 19"><circle cx="7" cy="7" r="5.6" fill="#bfe3fa" stroke="#5a8ab8" stroke-width="1.5"/><path d="M3.5 6 A3.6 3.6 0 0 1 8 3" stroke="#fff" stroke-width="1.4" fill="none"/><path d="M11 11.5 L15.3 17" stroke="#c89028" stroke-width="2.6" stroke-linecap="round"/><path d="M10.6 11 L12 12.8" stroke="#6a6a6a" stroke-width="2"/></svg>
<div class="t" style="left:178px;top:152.2px;font-size:11.6px;line-height:16px;height:16px;color:#000">Fatura Fiş Arama</div>
<!-- left panel -->
<div class="t u" style="left:158px;top:178px;font-size:6.9px">Arama</div>
<div class="inp" style="left:155.5px;top:189px;width:124.5px;height:13px"></div>
<div class="btn" style="left:157px;top:206px;width:104px;height:17px"></div>
<svg style="left:191px;top:210px" width="10" height="10" viewBox="0 0 10 10"><path d="M0.5 0.8 H9.5 L6 5 V9.2 L4 8 V5Z" fill="#62acf6" stroke="#2a76d8" stroke-width=".8"/></svg>
<div class="t" style="left:203.3px;top:209.5px;font-size:6.7px">Filtrele</div>
<div class="btn" style="left:263px;top:206px;width:17px;height:17px"></div>
<svg style="left:266px;top:209px" width="12" height="11" viewBox="0 0 12 11"><path d="M3 7 L8 1 L11 3 L6 9Z" fill="#e8c860" stroke="#8a6a2a" stroke-width=".5"/><path d="M8 1 L9.2 0 L12 2 L11 3Z" fill="#e04848"/><path d="M3 7 L6 9 L2.2 10Z" fill="#444"/><path d="M0.5 10.5 H11" stroke="#333" stroke-width=".9"/></svg>
<div class="a" style="left:156px;top:235px;width:125px;height:90px;border:1px solid #e8e8e8"></div>
<div class="t" style="left:160px;top:230px;font-size:6.9px;background:#f0f0f0;padding:0 2px">Arama Kriteri</div>
<div class="rd" style="top:244.5px"><i></i></div><div class="t" style="left:171.2px;top:243.5px">Evrak No</div>
<div class="rd" style="top:260.5px"></div><div class="t" style="left:171.2px;top:259.5px">Cari Kodu</div>
<div class="rd" style="top:276.5px"></div><div class="t" style="left:171.2px;top:275.5px">Ticari Ünvanı</div>
<div class="rd" style="top:292.5px"></div><div class="t" style="left:171.2px;top:291.5px">Yetkilisi</div>
<div class="rd" style="top:309px"></div><div class="t" style="left:171.2px;top:308px">Hepsi</div>
<div class="t u" style="left:158px;top:332.3px">Özel Kodu</div>
<div class="inp" style="left:155.5px;top:342px;width:125.5px;height:13px"></div>
<div class="a" style="left:271px;top:345px;width:7px;height:6px;border:1px solid #999;border-radius:1.5px;background:#f4f4f4"></div>
<div class="t u" style="left:158px;top:358.3px">Şube Kodu</div>
<div class="inp" style="left:155.5px;top:367px;width:125.5px;height:13px"></div>
<div class="t" style="left:159px;top:369px">Hepsi</div>
<svg style="left:272px;top:372px" width="6" height="4" viewBox="0 0 6 4"><path d="M0.6 0.6 L3 3.2 L5.4 0.6" fill="none" stroke="#222" stroke-width="1.1"/></svg>
<div class="a" style="left:156px;top:389px;width:125px;height:34px;border:1px solid #e4e4e4;border-top:0"></div>
<div class="t navy" style="left:159px;top:385px">Fatura Tarihi</div>
<div class="t" style="left:160px;top:396px;width:51px;text-align:right">Tarihinden</div>
<div class="inp" style="left:213px;top:394px;width:66px;height:13px"></div>
<div class="t" style="left:215px;top:396px;font-size:6.9px">22.01.2019</div>
<svg style="left:267.0px;top:394.5px" width="10" height="11" viewBox="0 0 10 11"><rect x="0.8" y="2" width="8.4" height="8.4" rx="1" fill="#fffef0" stroke="#8a8468" stroke-width=".8"/><path d="M0.8 3 Q0.8 1.6 2 1.6 H8 Q9.2 1.6 9.2 3 V4 H0.8Z" fill="#f0b820"/><rect x="2.2" y="0.3" width="1.3" height="2.4" rx=".5" fill="#d8a010"/><rect x="6.5" y="0.3" width="1.3" height="2.4" rx=".5" fill="#d8a010"/><path d="M3.6 5.6 H6.3 L4.8 9" fill="none" stroke="#555" stroke-width=".9"/></svg>
<div class="t" style="left:160px;top:409.5px;width:51px;text-align:right">Tarihine</div>
<div class="inp" style="left:213px;top:408px;width:66px;height:13px"></div>
<div class="t" style="left:215px;top:410px;font-size:6.9px">22.01.2019</div>
<svg style="left:267.0px;top:408.5px" width="10" height="11" viewBox="0 0 10 11"><rect x="0.8" y="2" width="8.4" height="8.4" rx="1" fill="#fffef0" stroke="#8a8468" stroke-width=".8"/><path d="M0.8 3 Q0.8 1.6 2 1.6 H8 Q9.2 1.6 9.2 3 V4 H0.8Z" fill="#f0b820"/><rect x="2.2" y="0.3" width="1.3" height="2.4" rx=".5" fill="#d8a010"/><rect x="6.5" y="0.3" width="1.3" height="2.4" rx=".5" fill="#d8a010"/><path d="M3.6 5.6 H6.3 L4.8 9" fill="none" stroke="#555" stroke-width=".9"/></svg>
<!-- grid 1 -->
<div class="a" style="left:282px;top:173px;width:301px;height:47px;background:#fff;border:1px solid #dcdcdc"></div>
<div class="a" style="left:284px;top:177px;width:1.2px;height:1.3px;background:#555;box-shadow:2.8px 0 #555,0 3.2px #555,2.8px 3.2px #555"></div>
<div class="bh" style="left:290.5px;top:174.3px;width:49.5px">Fatura No</div>
<div class="bh" style="left:341px;top:174.3px;width:49px">Cari Kodu</div>
<div class="bh" style="left:391px;top:174.3px;width:81px">Ticari Ünvanı</div>
<div class="bh" style="left:473px;top:174.3px;width:74px">Yetkilisi</div>
<div class="bh" style="left:548px;top:174.3px;width:34px">İlçesi</div>
<div class="a" style="left:290.5px;top:185px;width:291.5px;height:10.5px;background:#dcebfb"></div>
<svg style="left:284px;top:186px" width="5" height="8" viewBox="0 0 5 8"><path d="M0.5 0.5 L4.5 4 L0.5 7.5Z" fill="#000"/></svg>
<div class="t" style="left:291.2px;top:185px">EASF00020</div>
<div class="t" style="left:342px;top:185px">GENEL</div>
<div class="t" style="left:474px;top:185px">GENEL Müşteri</div>
<div class="a" style="left:283px;top:208px;width:299px;height:11px;background:#f0f0f0"></div>
<div class="a" style="left:294px;top:209.3px;width:10px;height:9px;background:#cacaca"></div>
<svg style="left:285px;top:210px" width="5" height="7" viewBox="0 0 5 7"><path d="M4 0.8 L1 3.5 L4 6.2" fill="none" stroke="#333" stroke-width="1.1"/></svg>
<svg style="left:574px;top:210px" width="5" height="7" viewBox="0 0 5 7"><path d="M1 0.8 L4 3.5 L1 6.2" fill="none" stroke="#333" stroke-width="1.1"/></svg>
<!-- splitter -->
<div class="a" style="left:370px;top:221.5px;width:124px;height:4.5px;background:#fafafa;border:1px solid #9a9a9a"></div>
<div class="a" style="left:380px;top:223.5px;width:104px;height:1px;background:repeating-linear-gradient(90deg,#8890b0 0 1px,transparent 1px 2px)"></div>
<svg style="left:374px;top:222.5px" width="4" height="3" viewBox="0 0 4 3"><path d="M0 0.3 H4 L2 2.8Z" fill="#10107c"/></svg>
<svg style="left:486px;top:222.5px" width="4" height="3" viewBox="0 0 4 3"><path d="M0 0.3 H4 L2 2.8Z" fill="#10107c"/></svg>
<div class="t navy" style="left:288px;top:226px">Fatura Hareketleri</div>
<div class="t" style="left:300px;top:239px;width:47px;text-align:right">Barkodu</div>
<div class="inp" style="left:352px;top:238px;width:206px;height:13px"></div>
<div class="a" style="left:546px;top:241px;width:8px;height:7px;border:1px solid #999;border-radius:2px;background:#f4f4f4"></div>
<!-- grid 2 -->
<div class="a" style="left:282px;top:254px;width:301px;height:161px;background:#fff;border:1px solid #dcdcdc"></div>
<div class="a" style="left:284px;top:257.5px;width:1.2px;height:1.3px;background:#555;box-shadow:2.8px 0 #555,0 3.2px #555,2.8px 3.2px #555"></div>
<div class="bh" style="left:291.5px;top:255px;width:55px">Stok Kodu</div>
<div class="bh" style="left:347.5px;top:255px;width:74px">Stok Adı</div>
<div class="bh" style="left:422.5px;top:255px;width:40px">Miktarı</div>
<div class="bh" style="left:463.5px;top:255px;width:43px;background:#10107c;padding-left:1px">Aktarılacak</div>
<div class="bh" style="left:507.5px;top:255px;width:46.5px">Birimi</div>
<div class="bh" style="left:555px;top:255px;width:15px">Tem</div>
<div class="a" style="left:283px;top:265px;width:8px;height:135px;background:repeating-linear-gradient(#f6f6f6 0 10.4px,#e8e8e8 10.4px 11.2px)"></div>
<svg style="left:285px;top:266.5px" width="5" height="8" viewBox="0 0 5 8"><path d="M0.5 0.5 L4.5 4 L0.5 7.5Z" fill="#000"/></svg>
<div class="a" style="left:291.5px;top:265.3px;width:279px;height:135.2px;background:repeating-linear-gradient(#ffc6c6 0,#ffc6c6 10.3px,#ffe2e2 10.5px,#ffe2e2 11px,#ffc6c6 11.26px)"></div>
<div class="a" style="left:346.8px;top:265.3px;width:1.2px;height:135.2px;background:#ffe6e6"></div>
<div class="a" style="left:421.8px;top:265.3px;width:1.2px;height:135.2px;background:#ffe6e6"></div>
<div class="a" style="left:462.8px;top:265.3px;width:1.2px;height:135.2px;background:#ffe6e6"></div>
<div class="a" style="left:506.8px;top:265.3px;width:1.2px;height:135.2px;background:#ffe6e6"></div>
<div class="a" style="left:554.2px;top:265.3px;width:1.2px;height:135.2px;background:#ffe6e6"></div>
<div class="a" style="left:292px;top:265.5px;width:54.8px;height:10.3px;background:#3595f5;outline:1px dotted #6a4a2a;outline-offset:-1px"></div>
<div class="r2" style="top:265.50px"><span class="c k" style="color:#fff">ST00019</span><span class="c n">ÜRÜN 1</span><span class="c m">1</span><span class="c ak">1</span><span class="c b">ADET</span></div>
<div class="r2" style="top:276.76px"><span class="c k">ST00020</span><span class="c n">ÜRÜN 2</span><span class="c m">1</span><span class="c ak">1</span><span class="c b">ADET</span></div>
<div class="r2" style="top:288.02px"><span class="c k">ST00021</span><span class="c n">ÜRÜN 3</span><span class="c m">3</span><span class="c ak">3</span><span class="c b">ADET</span></div>
<div class="r2" style="top:299.28px"><span class="c k">ST00022</span><span class="c n">ÜRÜN 4</span><span class="c m">1</span><span class="c ak">1</span><span class="c b">ADET</span></div>
<div class="r2" style="top:310.54px"><span class="c k">ST00023</span><span class="c n">ÜRÜN 5</span><span class="c m">1</span><span class="c ak">1</span><span class="c b">ADET</span></div>
<div class="r2" style="top:321.80px"><span class="c k">ST00024</span><span class="c n">ÜRÜN 6</span><span class="c m">1</span><span class="c ak">1</span><span class="c b">ADET</span></div>
<div class="r2" style="top:333.06px"><span class="c k">ST00025</span><span class="c n">ÜRÜN 7</span><span class="c m">1</span><span class="c ak">1</span><span class="c b">ADET</span></div>
<div class="r2" style="top:344.32px"><span class="c k">ST00026</span><span class="c n">ÜRÜN 8</span><span class="c m">1</span><span class="c ak">1</span><span class="c b">ADET</span></div>
<div class="r2" style="top:355.58px"><span class="c k">ST00027</span><span class="c n">ÜRÜN 9</span><span class="c m">1</span><span class="c ak">1</span><span class="c b">ADET</span></div>
<div class="r2" style="top:366.84px"><span class="c k">ST00028</span><span class="c n">ÜRÜN 10</span><span class="c m">1</span><span class="c ak">1</span><span class="c b">ADET</span></div>
<div class="r2" style="top:378.10px"><span class="c k">ST00029</span><span class="c n">ÜRÜN 11</span><span class="c m">1</span><span class="c ak">1</span><span class="c b">ADET</span></div>
<div class="r2" style="top:389.36px"><span class="c k">ST00030</span><span class="c n">ÜRÜN 12</span><span class="c m">1</span><span class="c ak">1</span><span class="c b">ADET</span></div>

<div class="a" style="left:571px;top:255px;width:11px;height:146px;background:#f0f0f0"></div>
<div class="a" style="left:572px;top:265.5px;width:8px;height:34px;background:#cdcdcd"></div>
<svg style="left:573px;top:258px" width="6" height="4" viewBox="0 0 6 4"><path d="M0.6 3.4 L3 0.8 L5.4 3.4" fill="none" stroke="#333" stroke-width="1.1"/></svg>
<svg style="left:573px;top:395px" width="6" height="4" viewBox="0 0 6 4"><path d="M0.6 0.6 L3 3.2 L5.4 0.6" fill="none" stroke="#333" stroke-width="1.1"/></svg>
<div class="a" style="left:283px;top:403.6px;width:299px;height:10.6px;background:#f0f0f0"></div>
<div class="a" style="left:295px;top:404.3px;width:10px;height:9.3px;background:#cacaca"></div>
<svg style="left:285px;top:405.3px" width="5" height="7" viewBox="0 0 5 7"><path d="M4 0.8 L1 3.5 L4 6.2" fill="none" stroke="#333" stroke-width="1.1"/></svg>
<svg style="left:562px;top:405.3px" width="5" height="7" viewBox="0 0 5 7"><path d="M1 0.8 L4 3.5 L1 6.2" fill="none" stroke="#333" stroke-width="1.1"/></svg>
<!-- buttons -->
<div class="btn" style="left:284px;top:416px;width:97px;height:24.5px"></div>
<svg style="left:315.5px;top:419px" width="19" height="19" viewBox="0 0 19 19"><path d="M9.5 .3 L13.6 5 H11.3 V7.7 H14 V5.4 L18.7 9.5 L14 13.6 V11.3 H11.3 V14 H13.6 L9.5 18.7 L5.4 14 H7.7 V11.3 H5 V13.6 L.3 9.5 L5 5.4 V7.7 H7.7 V5 H5.4Z" fill="#30b030" stroke="#1c841c" stroke-width=".7"/><path d="M9.5 1.6 L12 4.4 H10.6 V8.4 H8.4 V4.4 H7Z" fill="#a8eea8" opacity=".75"/><path d="M1.6 9.5 L4.4 7 V8.4 H8 V9.5Z" fill="#90e090" opacity=".6"/></svg>
<div class="t" style="left:337.5px;top:424px;font-size:8.1px">Seç</div>
<div class="btn" style="left:383px;top:416px;width:98px;height:24.5px"></div>
<svg style="left:397px;top:420px" width="18" height="17" viewBox="0 0 18 17"><rect x="1" y="3" width="9" height="13" rx="1" fill="#d8bc88" stroke="#a08450" stroke-width=".6"/><rect x="3" y="1.5" width="5" height="3" rx=".8" fill="#b8a070"/><path d="M4 6 H9 M4 8.5 H9 M4 11 H9" stroke="#6a8a5a" stroke-width=".8"/><path d="M2.5 5.5 l.8 .8 l1.2 -1.4 M2.5 8 l.8 .8 l1.2 -1.4" stroke="#2a8a2a" stroke-width=".7" fill="none"/><path d="M9 12 L16.5 1.5 L17.6 2.4 L10.2 13Z" fill="#555" stroke="#333" stroke-width=".4"/></svg>
<div class="t" style="left:418.7px;top:424px;font-size:8.1px">Tümünü Seç</div>
<div class="btn" style="left:482.5px;top:416px;width:98.5px;height:24.5px"></div>
<svg style="left:494px;top:420px" width="18" height="17" viewBox="0 0 18 17"><rect x="1" y="3" width="9" height="13" rx="1" fill="#d8bc88" stroke="#a08450" stroke-width=".6"/><rect x="3" y="1.5" width="5" height="3" rx=".8" fill="#b8a070"/><path d="M4 6 H9 M4 8.5 H9 M4 11 H9" stroke="#b0a080" stroke-width=".8"/><path d="M9 12 L16.5 1.5 L17.6 2.4 L10.2 13Z" fill="#666" stroke="#444" stroke-width=".4"/></svg>
<div class="t" style="left:515px;top:424px;font-size:8px">Tümünü Bırak</div>
<div class="btn" style="left:283px;top:443.7px;width:206px;height:21.8px"></div>
<svg style="left:361px;top:447px" width="18" height="15" viewBox="0 0 18 15"><path d="M0.8 8.3 L3.8 5.3 L7 8.6 L15 0.8 L17.6 3.4 L7 14.4Z" fill="#44c044" stroke="#2a8a2a" stroke-width=".6"/><path d="M2 8.3 L3.5 7 L7 10.6 L15.5 2.2 L16.3 3 L7 11.5Z" fill="#a0eca0" opacity=".7"/></svg>
<div class="t" style="left:382.5px;top:449.5px;font-size:8.1px">Tamam</div>
<div class="btn" style="left:490.4px;top:443.7px;width:91.2px;height:21.8px"></div>
<svg style="left:513px;top:447px" width="15.5" height="15" viewBox="0 0 17 17"><path d="M2.6 0.6 L8.5 5.4 L14.4 0.6 L16.4 2.8 L11.4 8.5 L16.4 14.2 L14.4 16.4 L8.5 11.6 L2.6 16.4 L0.6 14.2 L5.6 8.5 L0.6 2.8Z" fill="#ee3030" stroke="#b01818" stroke-width=".7"/><path d="M2.8 1.8 L8.5 6.6 L14.2 1.8 L8.5 8.3Z" fill="#ffa0a0" opacity=".75"/></svg>
<div class="t" style="left:532.5px;top:449.5px;font-size:8.1px">Vazgeç</div>
<!-- status -->
<div class="a" style="left:154px;top:466.5px;width:429px;height:1px;background:#dedede"></div>
<div class="a" style="left:154px;top:467.5px;width:429px;height:10.5px;background:#f4f4f4"></div>
<div class="a" style="left:247px;top:468px;width:1px;height:10px;background:#e4e4e4"></div>
<div class="t" style="left:167.5px;top:468.7px">Listelenen kayıt sayısı</div>
<div class="t" style="left:287px;top:468.7px">1</div>
<svg style="left:576px;top:471px" width="6" height="6" viewBox="0 0 6 6"><path d="M5 1v1M5 3v1M3 3v1M5 5v1M3 5v1M1 5v1" stroke="#aaa" stroke-width="1"/></svg>
<!--DIALOG-END-->
<!--FIS-START-->
<div class="a" style="left:758px;top:198px;width:165px;height:194.5px;background:#979797;border:1px solid #808080"></div>
<div class="a" style="left:763px;top:218px;width:155px;height:170px;background:#f0f0f0"></div>
<div class="a" style="left:763px;top:218.5px;width:155px;height:20px;background:linear-gradient(90deg,#fff 0,#fbfbfb 30px,#f3f3f3 120px);border-bottom:1px solid #fafafa"></div>
<div class="t" style="left:769px;top:220.3px;font-size:11.6px;line-height:16px;height:16px;color:#000">Fiş Bilgileri</div>
<div class="t" style="left:770px;top:243.5px;width:52px;text-align:right"><span class="u">F</span>atura No</div>
<div class="inp" style="left:824px;top:242.5px;width:89px;height:12px"></div>
<div class="t" style="left:826px;top:243.5px">SF000001</div>
<div class="t" style="left:770px;top:257.5px;width:52px;text-align:right"><span class="u">K</span>DV</div>
<div class="inp" style="left:824px;top:256.5px;width:89px;height:12px"></div>
<div class="t" style="left:827px;top:257.5px">Dahil</div>
<svg style="left:905px;top:261px" width="6" height="4" viewBox="0 0 6 4"><path d="M0.6 0.6 L3 3.2 L5.4 0.6" fill="none" stroke="#222" stroke-width="1.1"/></svg>
<div class="t" style="left:770px;top:271.5px;width:52px;text-align:right">Özel Kodu</div>
<div class="inp" style="left:824px;top:270.5px;width:72px;height:12px"></div>
<div class="t" style="left:826px;top:271.5px">001</div>
<div class="a" style="left:886px;top:273px;width:7px;height:6.5px;border:1px solid #999;border-radius:1.5px;background:#f4f4f4"></div>
<div class="btn" style="left:898px;top:270.5px;width:15px;height:12px"></div>
<div class="t" style="left:898px;top:271.5px;width:15px;text-align:center">V</div>
<div class="t" style="left:770px;top:285.5px;width:52px;text-align:right"><span class="u">E</span>k Bilgi -1</div>
<div class="inp" style="left:824px;top:284.5px;width:89px;height:12px"></div>
<div class="t" style="left:826px;top:285.5px">ÖZEL</div>
<svg style="left:905px;top:289px" width="6" height="4" viewBox="0 0 6 4"><path d="M0.6 0.6 L3 3.2 L5.4 0.6" fill="none" stroke="#222" stroke-width="1.1"/></svg>
<div class="t" style="left:770px;top:301px;width:52px;text-align:right">Vade Tarihi</div>
<div class="inp" style="left:824px;top:298.5px;width:89px;height:13px"></div>
<div class="t" style="left:826px;top:300.8px">01.01.2019</div>
<svg style="left:901.0px;top:299.0px" width="10" height="11" viewBox="0 0 10 11"><rect x="0.8" y="2" width="8.4" height="8.4" rx="1" fill="#fffef0" stroke="#8a8468" stroke-width=".8"/><path d="M0.8 3 Q0.8 1.6 2 1.6 H8 Q9.2 1.6 9.2 3 V4 H0.8Z" fill="#f0b820"/><rect x="2.2" y="0.3" width="1.3" height="2.4" rx=".5" fill="#d8a010"/><rect x="6.5" y="0.3" width="1.3" height="2.4" rx=".5" fill="#d8a010"/><path d="M3.6 5.6 H6.3 L4.8 9" fill="none" stroke="#555" stroke-width=".9"/></svg>
<div class="t" style="left:770px;top:314.5px;width:52px;text-align:right">Not</div>
<div class="a" style="left:824px;top:314px;width:89px;height:44px;background:#fff;border:1px solid #92c0ee"></div>
<div class="t" style="left:826px;top:317.3px;width:84px;white-space:normal;line-height:8.3px;height:18px;font-size:6.6px">A ÜRÜNÜ, B ÜRÜNÜ, C ÜRÜNÜ</div>
<div class="btn" style="left:763px;top:363px;width:155px;height:25px"></div>
<svg style="left:815px;top:368px" width="18" height="15" viewBox="0 0 18 15"><path d="M0.8 8.3 L3.8 5.3 L7 8.6 L15 0.8 L17.6 3.4 L7 14.4Z" fill="#44c044" stroke="#2a8a2a" stroke-width=".6"/><path d="M2 8.3 L3.5 7 L7 10.6 L15.5 2.2 L16.3 3 L7 11.5Z" fill="#a0eca0" opacity=".7"/></svg>
<div class="t" style="left:837.5px;top:371px;font-size:8.1px">Tamam</div>
<!--FIS-END-->
</body></html>
